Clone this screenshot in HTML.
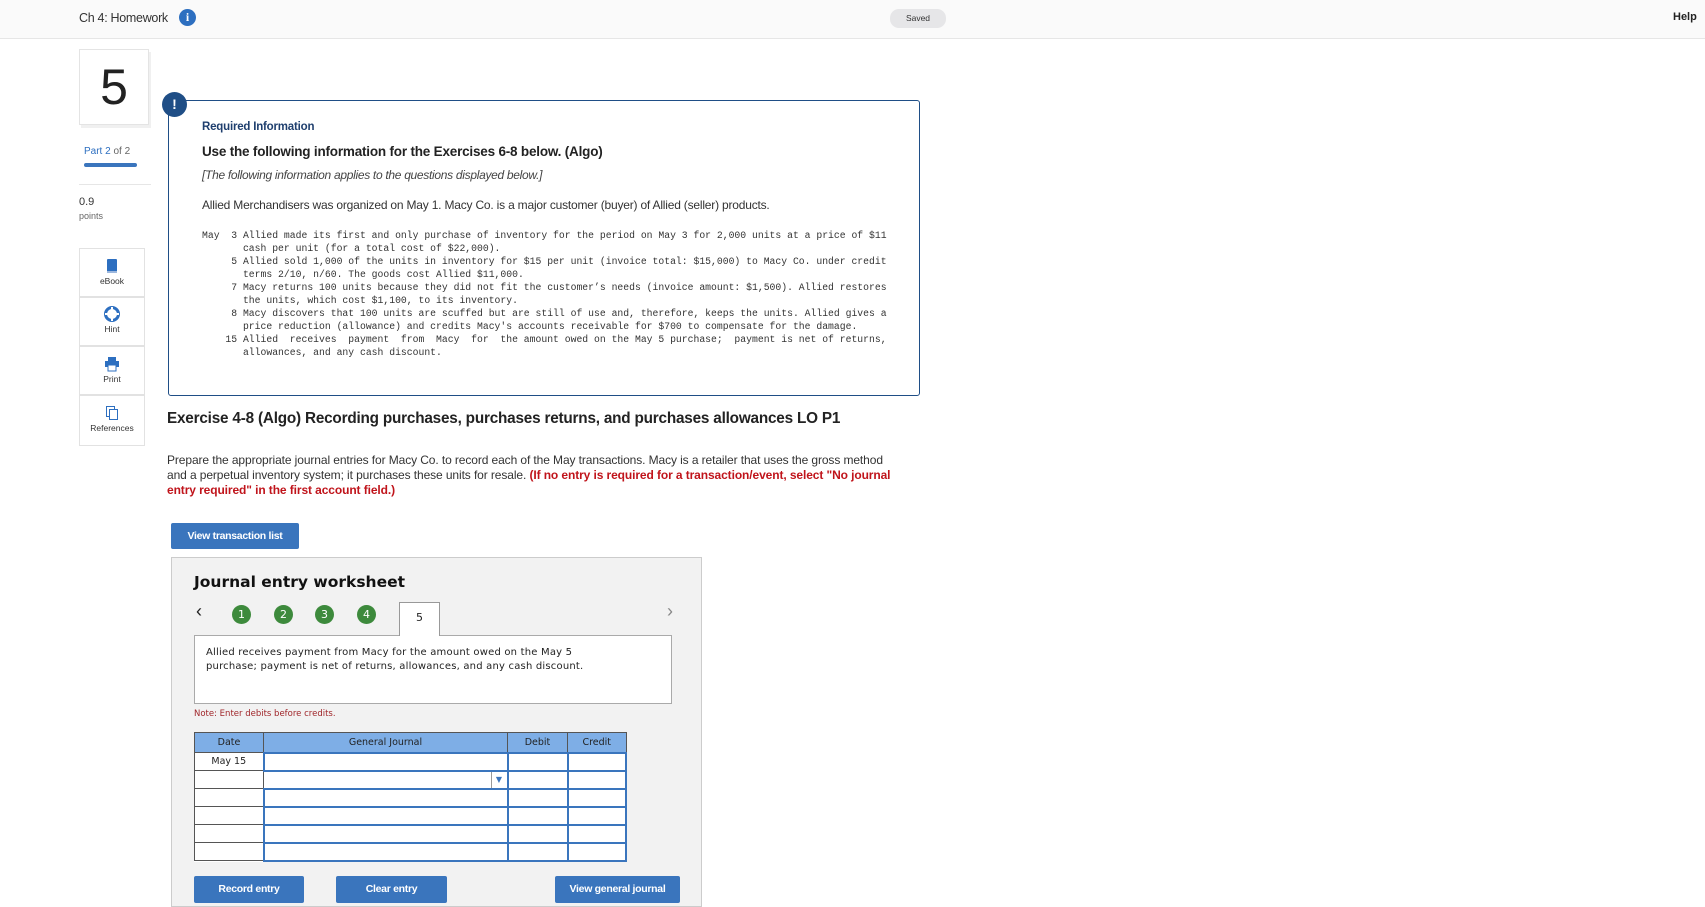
<!DOCTYPE html>
<html><head><meta charset="utf-8"><style>
*{box-sizing:border-box;margin:0;padding:0}
body{width:1705px;height:903px;overflow:hidden;background:#fff;font-family:"Liberation Sans",Arial,sans-serif;color:#222;position:relative}
.a{position:absolute}
.hdr{left:0;top:0;width:1705px;height:39px;background:#fafafa;border-bottom:1px solid #e6e6e6}
.mono{font-family:"Liberation Mono",monospace;font-size:9.75px;line-height:13px;color:#333;white-space:pre}
.btn{background:#3a75bd;color:#fff;font-size:10.5px;font-weight:bold;text-align:center;border-radius:2px;letter-spacing:-0.3px}
.circ{width:19px;height:19px;border-radius:50%;background:#3d8a3c;color:#fff;font-size:11px;text-align:center;line-height:19px;font-family:"DejaVu Sans",sans-serif}
.side{left:79px;width:66px;height:49px;border:1px solid #e2e2e2;text-align:center;font-size:8.5px;color:#333}
.v{font-family:"DejaVu Sans",Verdana,sans-serif}
table{border-collapse:collapse}
td{border:1px solid #555;height:18px;padding:0}
</style></head><body>
<div class="a hdr"></div>
<div class="a" style="left:79px;top:11px;font-size:12.5px;color:#333;letter-spacing:-0.3px">Ch 4: Homework</div>
<div class="a" style="left:179px;top:9px;width:17px;height:17px;border-radius:50%;background:#2d6fc0;color:#fff;font:bold 12px 'Liberation Serif',serif;text-align:center;line-height:17px">i</div>
<div class="a" style="left:890px;top:9px;width:56px;height:19px;border-radius:9px;background:#e6e6e8;font-size:8.5px;text-align:center;line-height:19px;color:#333">Saved</div>
<div class="a" style="left:1673px;top:11px;font-size:11px;font-weight:bold;color:#222">Help</div>

<div class="a" style="left:79px;top:49px;width:70px;height:76px;border:1px solid #e4e4e4;box-shadow:2px 3px 0 #f0f0f0;font-size:50px;text-align:center;line-height:74px;color:#222">5</div>
<div class="a" style="left:84px;top:146px;font-size:10px;color:#2d6fc0">Part 2 <span style="color:#666">of 2</span></div>
<div class="a" style="left:84px;top:163px;width:53px;height:4px;border-radius:2px;background:#3a75bd"></div>
<div class="a" style="left:79px;top:184px;width:72px;height:1px;background:#e6e6e6"></div>
<div class="a" style="left:79px;top:196px;font-size:11px;color:#333">0.9</div>
<div class="a" style="left:79px;top:211px;font-size:9px;color:#666">points</div>

<div class="a side" style="top:248px"><svg width="14" height="16" style="margin-top:9px"><rect x="2" y="1" width="10" height="13" rx="1" fill="#2d6fc0"/><rect x="2" y="13" width="10" height="2" fill="#9cb7dd"/></svg><br>eBook</div>
<div class="a side" style="top:297px"><svg width="16" height="16" style="margin-top:8px"><circle cx="8" cy="8" r="6.5" fill="none" stroke="#2d6fc0" stroke-width="3"/><path d="M8 1v14M1 8h14" stroke="#fff" stroke-width="2"/></svg><br>Hint</div>
<div class="a side" style="top:346px"><svg width="16" height="16" style="margin-top:9px"><rect x="4" y="1" width="8" height="4" fill="#2d6fc0"/><rect x="1" y="5" width="14" height="6" fill="#2d6fc0"/><rect x="4" y="9" width="8" height="6" fill="#fff" stroke="#2d6fc0"/></svg><br>Print</div>
<div class="a side" style="top:395px;height:51px"><svg width="14" height="16" style="margin-top:9px"><rect x="1.5" y="1.5" width="8" height="10" fill="none" stroke="#2d6fc0"/><rect x="4.5" y="4.5" width="8" height="10" fill="#fff" stroke="#2d6fc0"/></svg><br>References</div>

<div class="a" style="left:168px;top:100px;width:752px;height:296px;border:1px solid #1f4e86;border-radius:3px"></div>
<div class="a" style="left:162px;top:92px;width:25px;height:25px;border-radius:50%;background:#1f4e86;color:#fff;font-weight:bold;font-size:14px;text-align:center;line-height:25px">!</div>
<div class="a" style="left:202px;top:121px;font-size:11.5px;font-weight:bold;color:#1f3f6e;letter-spacing:-0.2px">Required Information</div>
<div class="a" style="left:202px;top:144px;font-size:13.5px;font-weight:bold;color:#222;letter-spacing:-0.2px">Use the following information for the Exercises 6-8 below. (Algo)</div>
<div class="a" style="left:202px;top:168px;font-size:12px;font-style:italic;color:#444;letter-spacing:-0.3px">[The following information applies to the questions displayed below.]</div>
<div class="a" style="left:202px;top:198px;font-size:12px;color:#333;letter-spacing:-0.2px">Allied Merchandisers was organized on May 1. Macy Co. is a major customer (buyer) of Allied (seller) products.</div>
<div class="a mono" style="left:202px;top:229px">May  3 Allied made its first and only purchase of inventory for the period on May 3 for 2,000 units at a price of $11
       cash per unit (for a total cost of $22,000).
     5 Allied sold 1,000 of the units in inventory for $15 per unit (invoice total: $15,000) to Macy Co. under credit
       terms 2/10, n/60. The goods cost Allied $11,000.
     7 Macy returns 100 units because they did not fit the customer’s needs (invoice amount: $1,500). Allied restores
       the units, which cost $1,100, to its inventory.
     8 Macy discovers that 100 units are scuffed but are still of use and, therefore, keeps the units. Allied gives a
       price reduction (allowance) and credits Macy's accounts receivable for $700 to compensate for the damage.
    15 Allied  receives  payment  from  Macy  for  the amount owed on the May 5 purchase;  payment is net of returns,
       allowances, and any cash discount.</div>

<div class="a" style="left:167px;top:410px;font-size:15.3px;font-weight:bold;color:#222;letter-spacing:-0.2px">Exercise 4-8 (Algo) Recording purchases, purchases returns, and purchases allowances LO P1</div>
<div class="a" style="left:167px;top:453px;width:728px;font-size:12px;line-height:15px;color:#333;letter-spacing:-0.1px">Prepare the appropriate journal entries for Macy Co. to record each of the May transactions. Macy is a retailer that uses the gross method and a perpetual inventory system; it purchases these units for resale. <b style="color:#c0141b">(If no entry is required for a transaction/event, select "No journal entry required" in the first account field.)</b></div>

<div class="a btn" style="left:171px;top:523px;width:128px;height:26px;line-height:26px">View transaction list</div>

<div class="a" style="left:171px;top:557px;width:531px;height:350px;background:#f2f2f2;border:1px solid #ccc"></div>
<div class="a v" style="left:194px;top:573px;font-size:15.5px;font-weight:bold;color:#111">Journal entry worksheet</div>
<div class="a" style="left:196px;top:601px;font-size:18px;color:#222">&#x2039;</div>
<div class="a circ" style="left:232px;top:605px">1</div>
<div class="a circ" style="left:274px;top:605px">2</div>
<div class="a circ" style="left:315px;top:605px">3</div>
<div class="a circ" style="left:357px;top:605px">4</div>
<div class="a v" style="left:399px;top:602px;width:41px;height:34px;background:#fff;border:1px solid #999;border-bottom:none;text-align:center;font-size:11px;line-height:30px;z-index:2">5</div>
<div class="a" style="left:667px;top:601px;font-size:18px;color:#888">&#x203A;</div>
<div class="a v" style="left:194px;top:635px;width:478px;height:69px;background:#fff;border:1px solid #aaa;padding:10px 11px 0 11px;font-size:10px;line-height:14px;color:#222;letter-spacing:0.2px"><div style="width:420px">Allied receives payment from Macy for the amount owed on the May 5 purchase; payment is net of returns, allowances, and any cash discount.</div></div>
<div class="a v" style="left:194px;top:709px;font-size:8.5px;color:#a0262a">Note: Enter debits before credits.</div>

<table class="a v" style="left:194px;top:732px;width:433px;font-size:9.5px;background:#fff">
<tr style="background:#7eaee6;color:#222"><td style="width:69px;text-align:center;height:20px">Date</td><td style="width:244px;text-align:center">General Journal</td><td style="width:60px;text-align:center">Debit</td><td style="text-align:center">Credit</td></tr>
<tr><td style="text-align:center">May 15</td><td style="border:2px solid #3a75bd"></td><td style="border:2px solid #3a75bd"></td><td style="border:2px solid #3a75bd"></td></tr>
<tr><td></td><td style="border:1px dotted #3a75bd;position:relative"><span style="position:absolute;right:0;top:0;width:16px;height:16px;border-left:1px solid #999;color:#3a75bd;font-size:8px;text-align:center;line-height:16px">&#9660;</span></td><td style="border:2px solid #3a75bd"></td><td style="border:2px solid #3a75bd"></td></tr>
<tr><td></td><td style="border:2px solid #3a75bd"></td><td style="border:2px solid #3a75bd"></td><td style="border:2px solid #3a75bd"></td></tr>
<tr><td></td><td style="border:2px solid #3a75bd"></td><td style="border:2px solid #3a75bd"></td><td style="border:2px solid #3a75bd"></td></tr>
<tr><td></td><td style="border:2px solid #3a75bd"></td><td style="border:2px solid #3a75bd"></td><td style="border:2px solid #3a75bd"></td></tr>
<tr><td></td><td style="border:2px solid #3a75bd"></td><td style="border:2px solid #3a75bd"></td><td style="border:2px solid #3a75bd"></td></tr>
</table>

<div class="a btn" style="left:194px;top:876px;width:110px;height:27px;line-height:26px">Record entry</div>
<div class="a btn" style="left:336px;top:876px;width:111px;height:27px;line-height:26px">Clear entry</div>
<div class="a btn" style="left:555px;top:876px;width:125px;height:27px;line-height:26px">View general journal</div>
</body></html>
